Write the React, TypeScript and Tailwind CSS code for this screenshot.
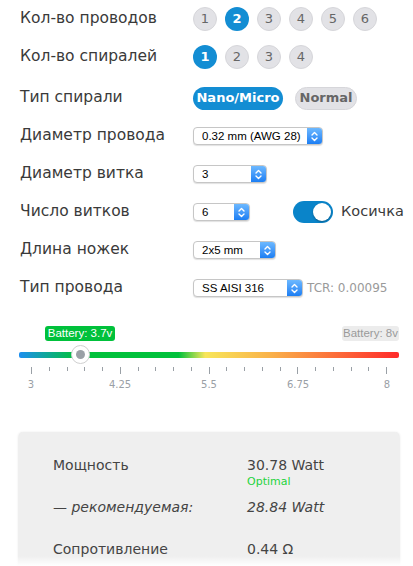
import React from "react"

const font = { fontFamily: '"DejaVu Sans", Verdana, sans-serif' }
const sans = { fontFamily: '"Liberation Sans", Arial, sans-serif' }

function Circles({ count, active }: { count: number; active: number }) {
  return (
    <div className="flex gap-[8px]">
      {Array.from({ length: count }, (_, i) => i + 1).map((n) =>
        n === active ? (
          <div
            key={n}
            className="w-[24px] h-[24px] rounded-full bg-[#138dd3] text-white text-[13px] font-bold flex items-center justify-center"
          >
            {n}
          </div>
        ) : (
          <div
            key={n}
            className="w-[24px] h-[24px] rounded-full bg-[#e2e2e6] border border-[#d6d6da] text-[#666] text-[13px] flex items-center justify-center"
          >
            {n}
          </div>
        )
      )}
    </div>
  )
}

function Select({ value, width }: { value: string; width: string }) {
  return (
    <div
      className={`${width} shrink-0 h-[18px] flex items-stretch bg-white border border-[#c6c6c6] rounded-[4px] shadow-[0_1px_1px_rgba(0,0,0,0.12)] overflow-hidden`}
      style={sans}
    >
      <span className="flex-1 min-w-0 pl-[8px] text-[11.5px] leading-[16px] text-black whitespace-nowrap overflow-hidden">{value}</span>
      <span className="w-[15px] shrink-0 bg-gradient-to-b from-[#6cb8ff] to-[#1a7ef3] flex items-center justify-center">
        <svg width="7" height="11" viewBox="0 0 7 11" fill="none" stroke="white" strokeWidth="1.4" strokeLinecap="round" strokeLinejoin="round">
          <path d="M1 4 L3.5 1.5 L6 4" />
          <path d="M1 7 L3.5 9.5 L6 7" />
        </svg>
      </span>
    </div>
  )
}

function Row({ label, className, children }: { label: string; className?: string; children: React.ReactNode }) {
  return (
    <div className={`flex items-center h-[38px] ${className ?? ""}`}>
      <div className="w-[173px] shrink-0 text-[15.5px] text-[#3a3a3a] whitespace-nowrap">{label}</div>
      {children}
    </div>
  )
}

export default function App() {
  const ticks = Array.from({ length: 21 }, (_, i) => i)
  const labels = ["3", "4.25", "5.5", "6.75", "8"]
  return (
    <div className="relative h-[566px] overflow-hidden bg-white" style={font}>
      <div className="px-[20px]">
        <Row label="Кол-во проводов">
          <Circles count={6} active={2} />
        </Row>
        <Row label="Кол-во спиралей">
          <Circles count={4} active={1} />
        </Row>
        <Row label="Тип спирали" className="mt-[3px]">
          <div className="flex gap-[12px]">
            <div className="h-[23px] w-[90px] rounded-full bg-[#138dd3] text-white text-[13px] font-bold flex items-center justify-center">
              Nano/Micro
            </div>
            <div className="h-[23px] w-[62px] rounded-full bg-[#e2e2e6] border border-[#d6d6da] text-[#666] text-[13px] font-bold flex items-center justify-center">
              Normal
            </div>
          </div>
        </Row>
        <Row label="Диаметр провода">
          <Select value="0.32 mm (AWG 28)" width="w-[130px]" />
        </Row>
        <Row label="Диаметр витка">
          <Select value="3" width="w-[74px]" />
        </Row>
        <Row label="Число витков">
          <Select value="6" width="w-[57px]" />
          <div className="ml-[43px] shrink-0 w-[40px] h-[22px] rounded-full bg-[#0a84c9] flex items-center justify-end pr-[2px]">
            <div className="w-[18px] h-[18px] rounded-full bg-white shadow-[0_1px_2px_rgba(0,0,0,0.3)]" />
          </div>
          <span className="ml-[8px] text-[14.5px] text-[#3a3a3a] whitespace-nowrap">Косичка</span>
        </Row>
        <Row label="Длина ножек">
          <Select value="2x5 mm" width="w-[83px]" />
        </Row>
        <Row label="Тип провода">
          <Select value="SS AISI 316" width="w-[110px]" />
          <span className="ml-[4px] text-[12px] text-[#9a9a9a] whitespace-nowrap">TCR: 0.00095</span>
        </Row>
      </div>

      <div className="ml-[19px] mr-[14px] mt-[19px]">
        <div className="relative h-[15px] flex justify-end">
          <div
            className="absolute left-[26px] top-0 h-[15px] w-[70px] rounded-[3px] bg-[#00c13b] text-white text-[11.5px] leading-[15px] text-center whitespace-nowrap"
            style={sans}
          >
            Battery: 3.7v
          </div>
          <div
            className="h-[15px] w-[57px] rounded-[3px] bg-[#ececec] text-[#9a9a9a] text-[11.5px] leading-[15px] text-center whitespace-nowrap"
            style={sans}
          >
            Battery: 8v
          </div>
        </div>
        <div className="relative mt-[11px] h-[6px] rounded-[2px] bg-[linear-gradient(to_right,#1e8ff0_0%,#00c13b_15%,#00c13b_42%,#f8e65a_49%,#f9b24a_66%,#ff2a2a_100%)]">
          <div className="absolute left-[52px] top-[-7px] w-[19px] h-[19px] rounded-full bg-white border border-[#d0d0d0] flex items-center justify-center">
            <div className="w-[9px] h-[9px] rounded-full bg-[#9aa0a6]" />
          </div>
        </div>
        <div className="mx-[12px] mt-[9px] flex justify-between items-start">
          {ticks.map((t) => (
            <div key={t} className={`w-px bg-[#9aa0a6] ${t % 5 === 0 ? "h-[7px]" : "h-[4px]"}`} />
          ))}
        </div>
        <div className="mx-[12px] mt-[3px] flex justify-between">
          {labels.map((l) => (
            <div key={l} className="w-0 flex justify-center">
              <span className="text-[10px] text-[#9aa0a6] whitespace-nowrap">{l}</span>
            </div>
          ))}
        </div>
      </div>

      <div className="ml-[19px] mr-[14px] mt-[40px] bg-[#efefef] rounded-[4px] shadow-[0_1px_3px_rgba(0,0,0,0.18)] pt-[23px] pb-[40px] pl-[34px] text-[14px] text-[#444]">
        <div className="flex">
          <div className="w-[194px] leading-[20px]">Мощность</div>
          <div>
            <div className="leading-[20px]">30.78 Watt</div>
            <div className="text-[11px] leading-[14px] text-[#1fd33d]">Optimal</div>
          </div>
        </div>
        <div className="flex mt-[8px] italic">
          <div className="w-[194px] leading-[20px]">— рекомендуемая:</div>
          <div className="leading-[20px]">28.84 Watt</div>
        </div>
        <div className="flex mt-[22px]">
          <div className="w-[194px] leading-[20px]">Сопротивление</div>
          <div className="leading-[20px]">0.44 Ω</div>
        </div>
      </div>

      <div className="pointer-events-none absolute left-0 right-0 bottom-0 h-[10px] bg-gradient-to-b from-transparent to-white" />
    </div>
  )
}
